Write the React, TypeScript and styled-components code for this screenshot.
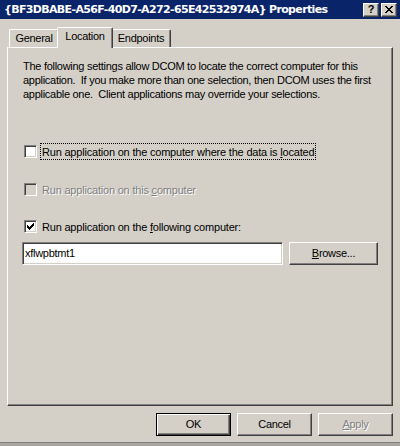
import React from "react";
import styled, { createGlobalStyle, css } from "styled-components";

const Global = createGlobalStyle`
  html, body { margin: 0; padding: 0; background: #d4d0c8; }
  * { box-sizing: border-box; }
  body {
    font-family: "Liberation Sans", Arial, sans-serif;
    font-size: 11px;
    letter-spacing: -0.28px;
    color: #000;
  }
`;

const Window = styled.div`
  width: 400px;
  height: 446px;
  background: #d4d0c8;
  display: flex;
  flex-direction: column;
  border-bottom: 3px solid #a9a6a0;
  position: relative;
  overflow: hidden;
`;

const BottomEdge = styled.div`
  position: absolute;
  left: 0;
  right: 0;
  bottom: 0;
  height: 1px;
  background: #808080;
`;

const TitleBar = styled.div`
  height: 19px;
  background: #0a246a;
  display: flex;
  align-items: center;
  padding: 0 3px 0 4px;
  flex-shrink: 0;
`;

const TitleText = styled.div`
  flex: 1;
  color: #fff;
  font-family: "DejaVu Sans", Verdana, sans-serif;
  font-weight: bold;
  font-size: 11px;
  letter-spacing: -0.65px;
  white-space: nowrap;
`;

const CaptionButton = styled.div<{ $gap?: number }>`
  background: #d4d0c8;
  border-top: 1px solid #fff;
  border-left: 1px solid #fff;
  border-right: 1px solid #404040;
  border-bottom: 1px solid #404040;
  box-shadow: inset -1px -1px 0 #808080;
  width: 16px;
  height: 14px;
  margin-left: ${(p) => p.$gap ?? 0}px;
  display: flex;
  align-items: center;
  justify-content: center;
  font-weight: bold;
  font-size: 11px;
  line-height: 1;
  letter-spacing: 0;
  padding-bottom: 1px;
`;

const Body = styled.div`
  flex: 1;
  display: flex;
  flex-direction: column;
  padding: 8px 7px 0 7px;
`;

const TabRow = styled.div`
  display: flex;
  align-items: flex-end;
  height: 20px;
  padding-left: 2px;
  position: relative;
  z-index: 1;
`;

const Tab = styled.div<{ $active?: boolean; $w: number; $ml?: number }>`
  width: ${(p) => p.$w}px;
  margin-left: ${(p) => p.$ml ?? 0}px;
  height: ${(p) => (p.$active ? 21 : 18)}px;
  margin-bottom: ${(p) => (p.$active ? -1 : 0)}px;
  background: #d4d0c8;
  border-top: 1px solid #fff;
  border-left: 1px solid #fff;
  border-right: 1px solid #404040;
  border-top-left-radius: 2px;
  border-top-right-radius: 2px;
  box-shadow: inset -1px 0 0 #808080;
  display: flex;
  justify-content: center;
  padding-top: 2px;
  position: relative;
  z-index: ${(p) => (p.$active ? 2 : 0)};
  white-space: nowrap;
`;

const Panel = styled.div`
  height: 359px;
  border-top: 1px solid #fff;
  border-left: 1px solid #fff;
  border-right: 1px solid #404040;
  border-bottom: 1px solid #404040;
  box-shadow: inset -1px -1px 0 #808080;
  display: flex;
  flex-direction: column;
  padding: 11px 14px 0 14px;
`;

const Paragraph = styled.div`
  margin-left: 1px;
  line-height: 14px;
  white-space: pre;
`;

const CheckRow = styled.div<{ $mt: number }>`
  display: flex;
  align-items: center;
  height: 17px;
  margin-top: ${(p) => p.$mt}px;
  margin-left: 2px;
`;

const Box = styled.div<{ $disabled?: boolean }>`
  width: 13px;
  height: 13px;
  flex-shrink: 0;
  background: ${(p) => (p.$disabled ? "#d4d0c8" : "#fff")};
  border-top: 1px solid #808080;
  border-left: 1px solid #808080;
  border-right: 1px solid #fff;
  border-bottom: 1px solid #fff;
  box-shadow: inset 1px 1px 0 #404040, inset -1px -1px 0 #d4d0c8;
  display: flex;
  align-items: center;
  justify-content: center;
`;

const Label = styled.div<{ $focus?: boolean; $disabled?: boolean }>`
  margin-left: 3px;
  height: 17px;
  display: flex;
  align-items: center;
  padding: 0 1px 0 1px;
  border: 1px dotted ${(p) => (p.$focus ? "#000" : "transparent")};
  white-space: nowrap;
  letter-spacing: -0.2px;
  ${(p) =>
    p.$disabled &&
    css`
      color: #808080;
      text-shadow: 1px 1px 0 #fff;
    `}
`;

const U = styled.span`
  text-decoration: underline;
  text-underline-offset: 1px;
`;

const InputRow = styled.div`
  display: flex;
  margin-top: 7px;
  gap: 6px;
`;

const TextField = styled.div`
  width: 261px;
  height: 23px;
  background: #fff;
  border-top: 1px solid #808080;
  border-left: 1px solid #808080;
  border-right: 1px solid #fff;
  border-bottom: 1px solid #fff;
  box-shadow: inset 1px 1px 0 #404040, inset -1px -1px 0 #d4d0c8;
  display: flex;
  align-items: center;
  padding-left: 2px;
  padding-bottom: 1px;
`;

const Button = styled.div<{ $w: number; $default?: boolean; $disabled?: boolean }>`
  width: ${(p) => p.$w}px;
  height: 23px;
  background: #d4d0c8;
  display: flex;
  align-items: center;
  justify-content: center;
  padding-bottom: 1px;
  ${(p) =>
    p.$default
      ? css`
          border: 1px solid #000;
          box-shadow: inset 1px 1px 0 #fff, inset -1px -1px 0 #404040,
            inset -2px -2px 0 #808080;
        `
      : css`
          border-top: 1px solid #fff;
          border-left: 1px solid #fff;
          border-right: 1px solid #404040;
          border-bottom: 1px solid #404040;
          box-shadow: inset -1px -1px 0 #808080;
        `}
  ${(p) =>
    p.$disabled &&
    css`
      color: #808080;
      text-shadow: 1px 1px 0 #fff;
    `}
`;

const ButtonRow = styled.div`
  display: flex;
  justify-content: flex-end;
  gap: 6px;
  margin-top: 7px;
`;

const CheckMark = () => (
  <svg width="7" height="7" viewBox="0 0 7 7" shapeRendering="crispEdges">
    <path
      d="M6 0h1v3h-1z M5 1h1v3h-1z M4 2h1v3h-1z M3 3h1v3h-1z M2 4h1v3h-1z M1 3h1v3h-1z M0 2h1v3h-1z"
      fill="#000"
    />
  </svg>
);

const CloseGlyph = () => (
  <svg width="8" height="7" viewBox="0 0 8 7" shapeRendering="crispEdges">
    <path
      d="M0 0h2v1h-2z M6 0h2v1h-2z M1 1h2v1h-2z M5 1h2v1h-2z M2 2h4v1h-4z M3 3h2v1h-2z M2 4h4v1h-4z M1 5h2v1h-2z M5 5h2v1h-2z M0 6h2v1h-2z M6 6h2v1h-2z"
      fill="#000"
    />
  </svg>
);

export default function App() {
  return (
    <>
      <Global />
      <Window>
        <TitleBar>
          <TitleText>{"{BF3DBABE-A56F-40D7-A272-65E42532974A} Properties"}</TitleText>
          <CaptionButton>?</CaptionButton>
          <CaptionButton $gap={2}>
            <CloseGlyph />
          </CaptionButton>
        </TitleBar>
        <Body>
          <TabRow>
            <Tab $w={50}>General</Tab>
            <Tab $w={56} $ml={-2} $active>
              Location
            </Tab>
            <Tab $w={60} $ml={-2}>
              Endpoints
            </Tab>
          </TabRow>
          <Panel>
            <Paragraph>
              {"The following settings allow DCOM to locate the correct computer for this\n" +
                "application.  If you make more than one selection, then DCOM uses the first\n" +
                "applicable one.  Client applications may override your selections."}
            </Paragraph>
            <CheckRow $mt={42}>
              <Box />
              <Label $focus>
                <span>
                  Run application on the computer where the data is <U>l</U>ocated
                </span>
              </Label>
            </CheckRow>
            <CheckRow $mt={21}>
              <Box $disabled />
              <Label $disabled>
                <span>
                  Run application on this <U>c</U>omputer
                </span>
              </Label>
            </CheckRow>
            <CheckRow $mt={20}>
              <Box>
                <CheckMark />
              </Box>
              <Label>
                <span>
                  Run application on the <U>f</U>ollowing computer:
                </span>
              </Label>
            </CheckRow>
            <InputRow>
              <TextField>xflwpbtmt1</TextField>
              <Button $w={89}>
                <span>
                  <U>B</U>rowse...
                </span>
              </Button>
            </InputRow>
          </Panel>
          <ButtonRow>
            <Button $w={75} $default>
              OK
            </Button>
            <Button $w={75}>Cancel</Button>
            <Button $w={75} $disabled>
              <span>
                <U>A</U>pply
              </span>
            </Button>
          </ButtonRow>
        </Body>
        <BottomEdge />
      </Window>
    </>
  );
}
